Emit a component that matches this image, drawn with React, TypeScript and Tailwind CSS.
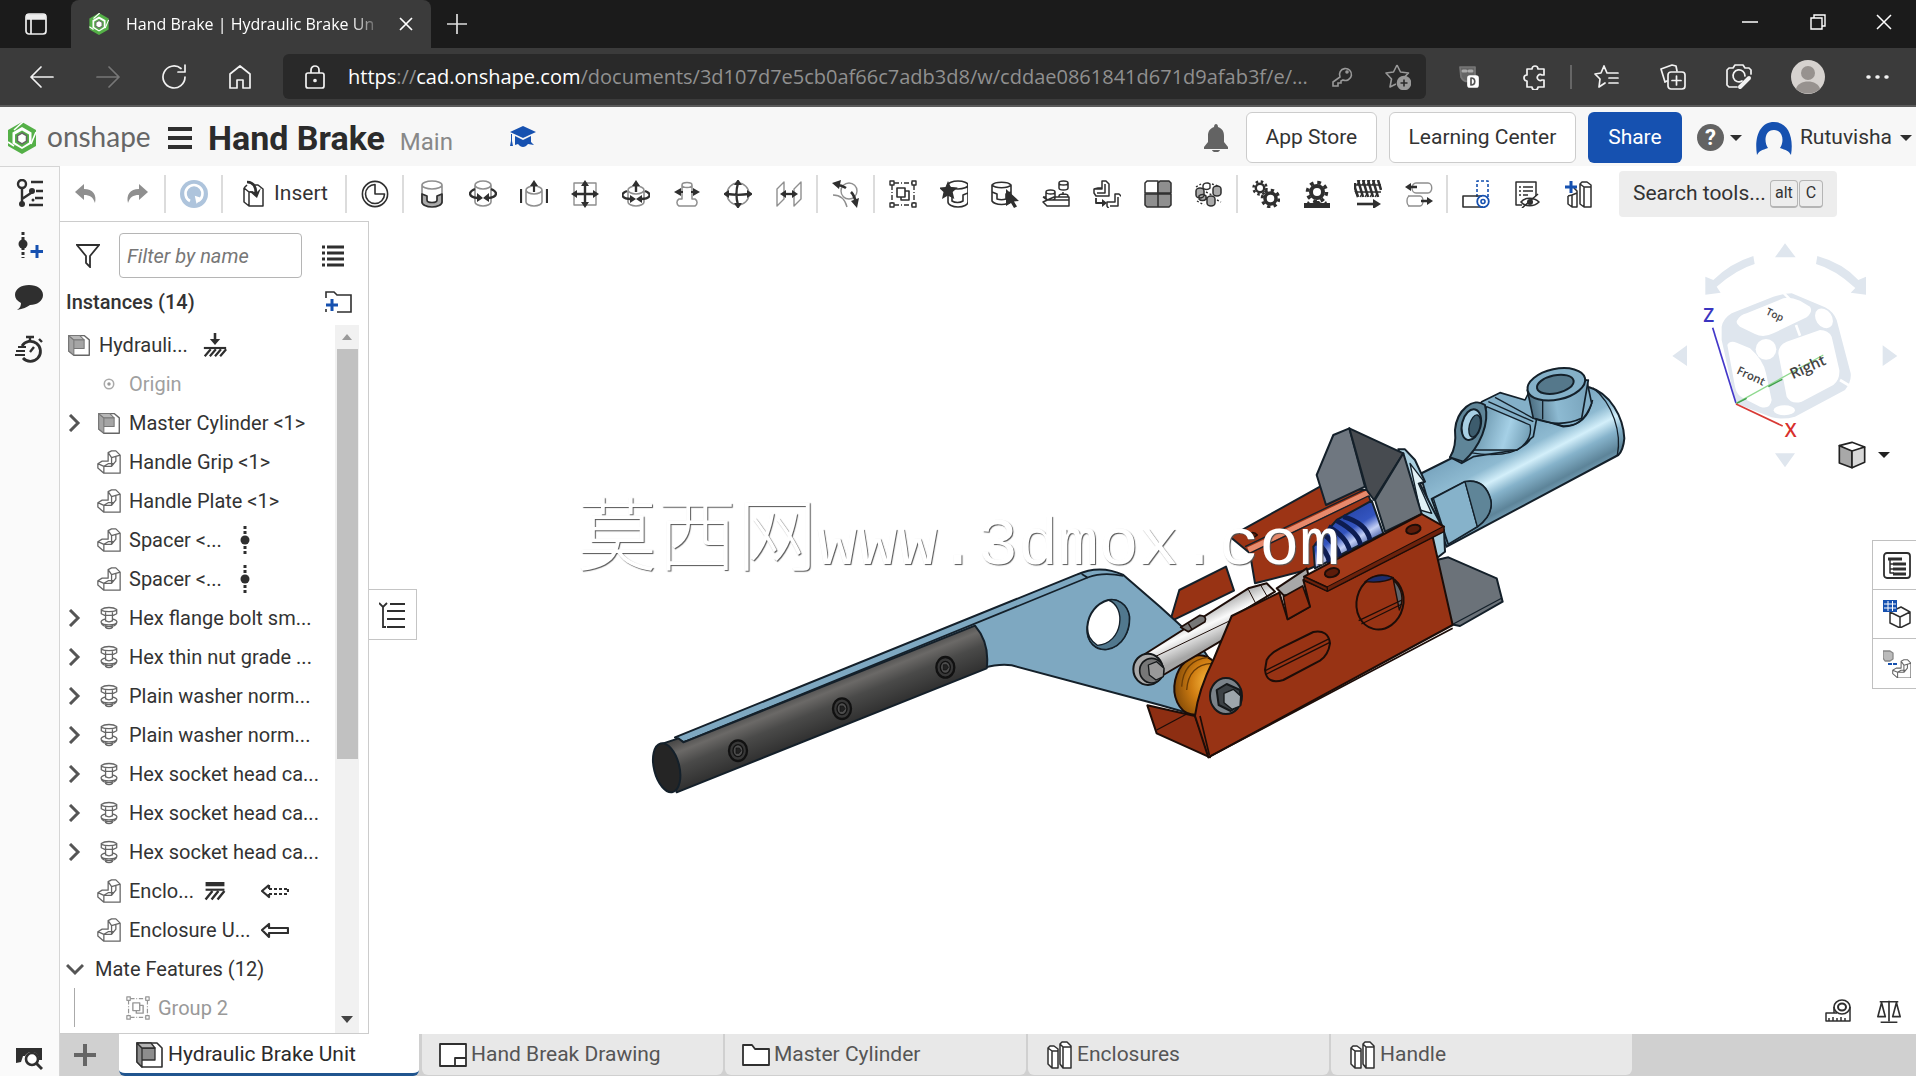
import { useState, type ReactNode } from "react";

type IconProps = { children: ReactNode; size?: number; label?: string };

/** 28-unit drawing grid shared by all the line icons. */
function Ico({ children, size = 28 }: IconProps) {
  return (
    <svg width={size} height={size} viewBox="0 0 28 28" fill="none" stroke="#2f2f2f" strokeWidth="1.8"
      strokeLinejoin="round" aria-hidden="true" className="shrink-0">
      {children}
    </svg>
  );
}

const G = "#8f8f8f";
const BLUE = "#1651b0";

function Cyl({ x = 5, y = 2, w = 18, h = 24, c = "#2f2f2f" }: { x?: number; y?: number; w?: number; h?: number; c?: string }) {
  const r = w / 2;
  return (
    <path stroke={c} strokeWidth="1.6"
      d={`M${x} ${y + 4}v${h - 8}a${r} 4 0 0 0 ${w} 0v-${h - 8}M${x} ${y + 4}a${r} 4 0 0 1 ${w} 0a${r} 4 0 0 1 -${w} 0z`} />
  );
}

const icons = {
  undo: <path fill={G} stroke="none" d="M3 12 12 4v5c9 0 13 6 11 14-2-6-5-8-11-8v5z" />,
  redo: <path fill={G} stroke="none" d="M25 12 16 4v5C7 9 3 15 5 23c2-6 5-8 11-8v5z" />,
  restore: (
    <>
      <circle cx="14" cy="14" r="14" fill="#aec4dc" stroke="none" />
      <path d="M10 21a8.500 8.500 0 1 1 8 0" stroke="#fff" strokeWidth="2.6" />
      <path d="M14 17h8l-4 7z" fill="#fff" stroke="none" transform="rotate(18 18 19)" />
    </>
  ),
  insert: (
    <>
      <path d="M4 8v14l5 4h14V9l-5-4h-3M4 8l5 4M9 12h4M9 12v14M4 8l3-3" strokeWidth="1.500" />
      <path d="M7 2c6 0 9 4 9 12" strokeWidth="2.600" />
      <path d="m9 11 8 7 4-10-4 4z" fill="#2f2f2f" stroke="none" />
    </>
  ),
  clock: (
    <>
      <circle cx="14" cy="14" r="12.6" strokeWidth="1.6" />
      <path d="M14 4.500a9.500 9.500 0 1 0 9.500 9.500H14z" strokeWidth="1.6" />
    </>
  ),
  fastened: (
    <>
      <Cyl x={4} y={1} w={20} h={25} c={G} />
      <path d="M4 14v8a10 5 0 0 0 20 0v-8l-5 2v4a5 2.500 0 0 1-10 0v-4z" fill="#aaa" strokeWidth="1.7" />
    </>
  ),
  revolute: (
    <>
      <Cyl x={6} y={1} w={16} h={25} c={G} />
      <path d="M6 9c-7 3-7 8 3 9M22 9c7 3 7 8-3 9" strokeWidth="2.4" />
      <path d="M8 13v9l6-4zM20 13v9l-6-4z" fill="#2f2f2f" stroke="none" />
    </>
  ),
  slider: (
    <>
      <Cyl x={6} y={6} w={16} h={20} c={G} />
      <path d="M1 9v14M27 9v14" strokeWidth="2.200" />
      <path d="M14 12V3" strokeWidth="2.2" /><path d="m14 0 4 6h-8z" fill="#2f2f2f" stroke="none" />
    </>
  ),
  planar: (
    <>
      <rect x="3" y="3" width="22" height="22" stroke={G} strokeWidth="1.4" />
      <path d="M14 3v22M3 14h22" strokeWidth="2.4" />
      <path d="m14 0 4 6h-8zM14 28l4-6h-8zM0 14l6-4v8zM28 14l-6-4v8z" fill="#2f2f2f" stroke="none" />
    </>
  ),
  cylindrical: (
    <>
      <Cyl x={6} y={6} w={16} h={20} c={G} />
      <path d="M14 12V3M5 11c-8 3-5 8 4 8M23 11c8 3 5 8-4 8" strokeWidth="2.4" />
      <path d="m14 0 4 6h-8zM8 15v8l6-4zM20 15v8l-6-4z" fill="#2f2f2f" stroke="none" />
    </>
  ),
  pinSlot: (
    <>
      <path d="M9 5v14H6a4 4 0 0 0 0 7h16a4 4 0 0 0 0-7h-3V5a5 2.500 0 0 0-10 0 5 2.500 0 0 0 10 0" stroke={G} strokeWidth="1.5" />
      <path d="M4 12h6M18 12h6" strokeWidth="2.2" />
      <path d="m1 12 7-4v8zM27 12l-7-4v8z" fill="#2f2f2f" stroke="none" />
    </>
  ),
  ball: (
    <>
      <circle cx="14" cy="14" r="11" stroke={G} strokeWidth="1.5" />
      <path d="M14 3c-2 7-2 15 0 22M3 14c7 1 15 1 22 0" strokeWidth="2.3" />
      <path d="m14-1 4 6h-8zM14 29l4-6h-8zM-1 14l6-4v8zM29 14l-6-4v8z" fill="#2f2f2f" stroke="none" />
    </>
  ),
  parallel: (
    <>
      <path d="m2 9 7-7v17l-7 7zM19 9l7-7v17l-7 7z" stroke={G} strokeWidth="1.4" />
      <path d="M8 14h12" strokeWidth="2.3" /><path d="m5 14 6-4v8zM23 14l-6-4v8z" fill="#2f2f2f" stroke="none" />
    </>
  ),
  tangent: (
    <>
      <circle cx="17" cy="11" r="8" stroke={G} strokeWidth="1.400" />
      <path d="M1 15c8 0 12 4 14 12" stroke={G} strokeWidth="1.400" />
      <path d="M5 5c4 0 6 1 9 3M19 12c3 3 4 6 5 11" strokeWidth="2.600" />
      <path d="m0 3 9-3-2 9zM25 28l-6-7 8-3z" fill="#2f2f2f" stroke="none" />
    </>
  ),
  group: (
    <>
      <path d="M5 3h18M5 25h18M3 5v18M25 5v18" strokeDasharray="5 2 1 2" strokeWidth="1.4" />
      <path d="M1 1h4v4H1zM23 1h4v4h-4zM1 23h4v4H1zM23 23h4v4h-4z" fill="#fff" strokeWidth="1.400" />
      <path d="M8 8h8v9H8z M16 11h4v9h-8v-3" strokeWidth="1.600" />
    </>
  ),
  mateConnector: (
    <>
      <path d="M8 5a10 4 0 0 1 20 0v17a10 5 0 0 1-20 0zM8 5a10 4 0 0 0 20 0M8 15l4 1v5c3 2 8 2 11 0v-6l5-2" strokeWidth="1.600" />
      <path d="m8 1 2.700 6 7 .500-5 4.500 1.600 7L8 15.500 2 19l1.500-7-5-4.500 7-.5z" fill="#2f2f2f" stroke="none" />
    </>
  ),
  selectMate: (
    <>
      <path d="M1 5a10 4 0 0 1 19 0v16a10 5 0 0 1-19 0zM1 5a10 4 0 0 0 19 0M1 12l5 2v5c3 1 6 1 9 0v-5l5-2" strokeWidth="1.600" />
      <path d="m15 9 13 12-5 .5 3 5-3 1.500-3-5-5 3z" fill="#2f2f2f" stroke="none" />
    </>
  ),
  bricks: (
    <>
      <path d="M1 17h3M12 17h15v9H5l-4-4zM1 17l4 3h22M17 3v5a4.500 2 0 0 0 9 0V3a4.500 2 0 0 0-9 0 4.500 2 0 0 0 9 0M4 12v6a4.500 2 0 0 0 9 0v-6a4.500 2 0 0 0-9 0 4.500 2 0 0 0 9 0M17 17v-1a4.500 2 0 0 1 9 0v1M21 12v3" strokeWidth="1.500" />
    </>
  ),
  replicate: (
    <>
      <path d="M9 1h4l3 3v12H3l-2-3V9h8zM1 9l4-1h4M12 4v9H4M22 14h4l3 3v12H16l-2-3v-4h8zM25 17v9h-8" strokeWidth="1.500" />
      <path d="M3 18v5h8" strokeWidth="1.800" /><path d="m9 19 5 4-5 4z" fill="#2f2f2f" stroke="none" />
    </>
  ),
  pattern: (
    <>
      <path d="M1 3 3 1h11v12H1zM14 1v26" strokeWidth="1.500" />
      <path d="M14 3l2-2h9l2 2v10H14zM1 14h13v13H3l-2-2zM14 14h13v11l-2 2H14z" fill={G} strokeWidth="1.500" />
    </>
  ),
  circular: (
    <>
      <path d="M8 6a4 3 0 0 1 7-2v4a4 3 0 0 1-7 0z" strokeWidth="1.4" />
      <path d="M18 9a4 3 0 0 1 8 0v4a4 3 0 0 1-8 0zM1 11a4 3 0 0 1 8 0v4a4 3 0 0 1-8 0zM12 19a4 3 0 0 1 8 0v4a4 3 0 0 1-8 0zM4 16a4 3 0 0 1 7 0v3a4 3 0 0 1-7 0z" fill="#aaa" strokeWidth="1.500" />
      <path d="M17 4l6 2M1 7l5-3M2 21l7 4M22 20l4 2M11 12l6 3" strokeDasharray="2 2" strokeWidth="1.400" />
    </>
  ),
  gears: (
    <>
      <circle cx="8" cy="8" r="4.200" strokeWidth="2.400" /><circle cx="8" cy="8" r="6.500" strokeWidth="2.500" strokeDasharray="2.500 2.600" />
      <circle cx="18.500" cy="18.500" r="5.500" strokeWidth="3.500" /><circle cx="18.500" cy="18.500" r="8.300" strokeWidth="3" strokeDasharray="3.300 3.220" />
    </>
  ),
  rack: (
    <>
      <circle cx="14" cy="12" r="6" strokeWidth="4" /><circle cx="14" cy="12" r="9.500" strokeWidth="3.500" strokeDasharray="3.700 3.760" />
      <path d="M1 28v-5h3l1-2 2 2h3l2-2h4l2 2h3l2-2 1 2h3v5z" fill="#2f2f2f" stroke="none" />
    </>
  ),
  screw: (
    <>
      <path d="M1 3v5l3 9M4 0l5 17M9 0l5 17M14 0l5 17M19 0l5 17M24 0l3 10" strokeWidth="2.600" />
      <path d="M1 11 4 17M3 5l3-5M8 5l3-5M13 5l3-5M18 5l3-5M6 17l3-5M11 17l3-5M16 17l3-5M21 17l3-5M1 5h26M1 12h26" strokeWidth="1.300" />
      <path d="M3 24h19" strokeWidth="2.600" /><path d="m19 19 8 5-8 5z" fill="#2f2f2f" stroke="none" />
    </>
  ),
  linear: (
    <>
      <path d="M11 3h12a3 4 0 0 1 0 10H11a4 5 0 0 1 0-10M3 16h12M3 26h13M5 16a3 5 0 0 0 0 10M15 16a3 5 0 0 1 0 10" stroke={G} strokeWidth="1.400" />
      <path d="M3 7h9M16 21h8" strokeWidth="2.300" /><path d="m0 7 6-4v8zM28 21l-6-4v8z" fill="#2f2f2f" stroke="none" />
    </>
  ),
  position: (
    <>
      <path d="M15 17V1h11v17" stroke={BLUE} strokeDasharray="3 2" strokeWidth="1.600" />
      <path d="M20 16H1v11h20" strokeWidth="1.600" /><circle cx="21" cy="21.500" r="5.800" stroke={BLUE} /><circle cx="21" cy="21.500" r="2" stroke={BLUE} strokeWidth="1.600" />
    </>
  ),
  hiddenList: (
    <>
      <path d="M9 25H3V2h20v14" strokeWidth="1.500" /><path d="M6 7h2M10 7h10M6 11h2M10 11h10M6 15h2M10 15h5" strokeWidth="1.700" />
      <path d="M8 22c4-5 13-5 18 0-5 5-14 5-18 0zM9 28l16-14" strokeWidth="1.600" /><circle cx="17" cy="22" r="3" fill="#2f2f2f" stroke="none" />
    </>
  ),
  addParts: (
    <>
      <path d="M4 16v8l4 3h5V11l-3-3M8 27V15l5-2M4 16l4-1M16 4v20l4 3h7V5l-4-3h-5zM16 4l4 3h7M20 7v20" strokeWidth="1.500" />
      <path d="M7 1v12M1 7h12" stroke={BLUE} strokeWidth="3" />
    </>
  ),
  tree: (
    <>
      <circle cx="7" cy="5" r="4" strokeWidth="2.400" /><path d="M7 9v15M7 20l9-6V13" strokeWidth="2.400" />
      <circle cx="17" cy="12" r="3" fill="#2f2f2f" stroke="none" /><circle cx="7" cy="25" r="3" fill="#2f2f2f" stroke="none" />
      <circle cx="18" cy="21" r="1.500" fill="#2f2f2f" stroke="none" />
      <path d="M16 3h12M21 12h7M20 19h8M14 26h14" strokeWidth="2.600" />
    </>
  ),
  addMate: (
    <>
      <path d="M8 1v26" strokeWidth="3" strokeDasharray="3 2" /><circle cx="8" cy="13" r="4.500" fill="#2f2f2f" stroke="none" />
      <path d="M22 14v13M15.500 20.500h13" stroke={BLUE} strokeWidth="3" />
    </>
  ),
  comment: <path d="M14 2c8 0 14 4 14 10s-6 10-13 10c-3 2-7 4-13 5 3-2 4-4 4-7C2 18 0 15 0 12 0 6 6 2 14 2z" fill="#2f2f2f" stroke="none" />,
  stopwatch: (
    <>
      <path d="M7 11a10 10 0 1 1 1 12" strokeWidth="2.800" /><path d="M11 2h8M15 2v4M24 4l3 3M15 17l4-5" strokeWidth="2.400" />
      <path d="M3 12h8M1 16h9M0 20h10" strokeWidth="1.800" />
    </>
  ),
  tabSearch: (
    <>
      <path d="M1 5h26v12h-3c0-5-3-8-7-8s-6 2-7 4H8l-2 6-5 1z" fill="#2f2f2f" stroke="none" />
      <circle cx="17" cy="16" r="6" fill="#fff" strokeWidth="2.600" /><path d="m21 20 6 6" strokeWidth="3" />
    </>
  ),
  assembly: (
    <>
      <path d="M2 3h18l6 5v18H8l-6-5z" fill="#fff" stroke="#666" strokeWidth="1.600" />
      <path d="m2 3 6 5v18l-6-5zM8 8h12v10H8z" fill="#a5a5a5" stroke="#777" strokeWidth="1.200" /><path d="M2 3h13l5 5H8z" fill="#b8b8b8" stroke="#777" strokeWidth="1.200" />
    </>
  ),
  part: (
    <>
      <path d="M1 16l5-3h7V3l4-2h5l5 5v21H8l-7-6zM1 16l7 3v8M8 19h9V9l10-3M17 9l-4-6M17 19l5-6V7M8 19l5-3h6" stroke="#666" strokeWidth="1.500" />
    </>
  ),
  bolt: (
    <>
      <path d="M5 4c4-3 14-3 18 0v5l-4 2h-10L5 9zM5 5c5 2 13 2 18 0M10 7v4M18 7v4M10 11v7M18 11v7M10 15c-8 2-7 7 4 7s12-5 4-7M10 17c2 2 6 2 8 0M10 22v3c2 2 6 2 8 0v-3M5 20c1 3 5 4 9 4s8-1 9-4" stroke="#666" strokeWidth="1.500" />
    </>
  ),
  origin: (
    <>
      <circle cx="14" cy="14" r="5.500" stroke="#aaa" strokeWidth="1.800" /><circle cx="14" cy="14" r="2" fill="#999" stroke="none" />
    </>
  ),
  ground: (
    <>
      <path d="M14 0v8" strokeWidth="3" /><path d="m8 7 6 7 6-7z" fill="#2f2f2f" stroke="none" />
      <path d="M1 17.500h26" strokeWidth="2.500" /><path d="m2 27 7-8M8 27l7-8M14 27l7-8M20 27l7-8" strokeWidth="2.600" />
    </>
  ),
  fixed: (
    <>
      <path d="M3 6h22" strokeWidth="5" /><path d="M3 12.500h22" strokeWidth="2.500" />
      <path d="m3 24 8-10M10 24l8-10M17 24l8-10" strokeWidth="2.800" />
    </>
  ),
  dof: (
    <>
      <path d="M14 0v28" strokeWidth="3" strokeDasharray="3 2" /><circle cx="14" cy="14" r="4.500" fill="#2f2f2f" stroke="none" />
    </>
  ),
  arrow: <path d="M1 14l7-6v4h19v5H8v4z" strokeWidth="2.200" />,
  arrowDashed: (
    <>
      <path d="M8 8l-7 6 7 6v-3M8 8v4" strokeWidth="2.200" /><path d="M8 12h20M8 17h20M27 12v5" strokeWidth="2.200" strokeDasharray="3 2" />
    </>
  ),
  tabAssembly: (
    <>
      <path d="M2 2h20l5 5v19H7l-5-5z" fill="#fff" strokeWidth="1.600" />
      <path d="m2 2 5 5v19l-5-5zM7 7h13v12H7z" fill="#8d8d8d" strokeWidth="1.300" /><path d="M2 2h14l4 5H7z" fill="#b5b5b5" strokeWidth="1.300" />
    </>
  ),
  drawing: <path d="M1 3h26v22H1zM16 25v-8h11" fill="#fff" strokeWidth="1.800" />,
  folder: <path d="M1 24V4h9l3 4h14v16z" fill="#fff" strokeWidth="1.800" />,
  studio: <path d="M3 7v16l4 4h6V8L9 5H5zM3 7l4 3h6M7 10v17M15 3v20l3 4h8V5l-4-4h-5zM15 3l3 3h8M18 6v21" fill="#fff" strokeWidth="1.500" />,
  tape: (
    <>
      <ellipse cx="18" cy="9" rx="8" ry="7" strokeWidth="1.600" /><ellipse cx="18" cy="9" rx="4" ry="3.500" strokeWidth="2" />
      <path d="M26 9v14H2v-8h11M5 23v-3M9 23v-4M13 23v-3M17 23v-4M21 23v-3M10 9v6" strokeWidth="1.500" />
    </>
  ),
  scales: <path d="M4 3h20M14 2v22M6 4 2 19h8zM22 4l-4 15h8zM5 25h18M2 19h8M18 19h8" strokeWidth="1.800" />,
};

type IconName = keyof typeof icons;

function Tool({ name }: { name: IconName }) {
  return (
    <button type="button" aria-label={name} className="flex h-12 w-[51px] shrink-0 items-center justify-center hover:bg-gray-100">
      <Ico>{icons[name]}</Ico>
    </button>
  );
}

function Sep() {
  return <span className="mx-[2px] h-[38px] w-[2px] shrink-0 bg-[#dcdcdc]" />;
}

function Caret() {
  return <svg width="12" height="8" viewBox="0 0 12 8" aria-hidden="true" className="shrink-0"><path d="M0 1h12L6 7z" fill="#2f2f2f" /></svg>;
}

function Logo({ size }: { size: number }) {
  return (
    <svg width={size} height={size} viewBox="0 0 32 32" aria-hidden="true" className="shrink-0">
      <path d="M16 0 30 8v16l-14 8L2 24V8z" fill="#54b047" />
      <path d="m16 5 9.500 5.500v11L16 27l-9.500-5.500v-11z" fill="#fff" />
      <path d="m16 8.500 7 4v8l-7 4.500-7-4.500v-8z" fill="#54b047" />
      <path d="m16 11 4.500 2.700v5.400L16 21.800l-4.500-2.700v-5.400z" fill="#fff" stroke="#666" strokeWidth="1.500" />
      <path d="M17 0 8 8M2 20l6 4M30 10l-5 12" stroke="#fff" strokeWidth="1.600" />
    </svg>
  );
}

/* ---------- browser chrome ---------- */

function ChromeButton({ label, children }: { label: string; children: ReactNode }) {
  return (
    <button type="button" aria-label={label} className="flex h-11 w-[66px] shrink-0 items-center justify-center">
      <svg width="26" height="26" viewBox="0 0 26 26" fill="none" stroke="#f2f2f2" strokeWidth="1.700" strokeLinejoin="round" strokeLinecap="round">
        {children}
      </svg>
    </button>
  );
}

function TabStrip() {
  return (
    <div className="flex h-12 bg-[#1b1b1b] text-white">
      <button type="button" aria-label="Tab actions" className="flex w-[71px] items-center justify-center">
        <svg width="22" height="22" viewBox="0 0 22 22" fill="none" stroke="#eee" strokeWidth="1.700">
          <rect x="1" y="1" width="20" height="20" rx="3" /><path d="M2 2h18v4H2z" fill="#eee" /><path d="M6 6v15" />
        </svg>
      </button>
      <div className="flex w-[360px] items-center rounded-t-lg bg-[#3b3b3b] pl-[17px]">
        <Logo size={22} />
        <span className="ml-4 w-[256px] whitespace-nowrap font-['Open_Sans',sans-serif] text-[16px] [mask-image:linear-gradient(to_right,black_88%,transparent)]">
          Hand Brake | Hydraulic Brake Un
        </span>
        <button type="button" aria-label="Close tab" className="ml-3 flex h-6 w-6 items-center justify-center">
          <svg width="14" height="14" viewBox="0 0 14 14" stroke="#fff" strokeWidth="1.700"><path d="m1 1 12 12M13 1 1 13" /></svg>
        </button>
      </div>
      <button type="button" aria-label="New tab" className="flex w-[52px] items-center justify-center">
        <svg width="22" height="22" viewBox="0 0 22 22" stroke="#ddd" strokeWidth="1.700"><path d="M11 1v20M1 11h20" /></svg>
      </button>
      <div className="ml-auto flex pb-1">
        <button type="button" aria-label="Minimize" className="flex w-[68px] items-center justify-center">
          <svg width="16" height="16" viewBox="0 0 16 16" stroke="#fff" strokeWidth="1.500"><path d="M0 8h16" /></svg>
        </button>
        <button type="button" aria-label="Restore" className="flex w-[68px] items-center justify-center">
          <svg width="16" height="16" viewBox="0 0 16 16" stroke="#fff" strokeWidth="1.400" fill="none"><path d="M1 4h11v11H1zM4 4V1h11v11h-3" /></svg>
        </button>
        <button type="button" aria-label="Close" className="flex w-[64px] items-center justify-center">
          <svg width="16" height="16" viewBox="0 0 16 16" stroke="#fff" strokeWidth="1.500"><path d="m1 1 14 14M15 1 1 15" /></svg>
        </button>
      </div>
    </div>
  );
}

function AddressRow() {
  return (
    <div className="flex h-[59px] items-center border-b-2 border-[#5a5a5a] bg-[#3b3b3b] pr-[6px] pl-[9px]">
      <ChromeButton label="Back"><path d="M24 13H2M12 3 2 13l10 10" /></ChromeButton>
      <ChromeButton label="Forward"><path stroke="#777" d="M2 13h22M14 3l10 10-10 10" /></ChromeButton>
      <ChromeButton label="Refresh"><path d="M24 13a11 11 0 1 1-4-8.500M24 1v7h-7" /></ChromeButton>
      <ChromeButton label="Home"><path d="M3 24V10l10-8 10 8v14h-7v-8h-6v8z" /></ChromeButton>
      <div className="ml-[10px] flex h-[45px] min-w-0 flex-1 items-center rounded-md bg-[#292929] font-['Open_Sans',sans-serif]">
        <svg width="20" height="24" viewBox="0 0 20 24" fill="none" stroke="#f2f2f2" strokeWidth="1.700" className="ml-[22px] shrink-0">
          <rect x="1" y="8" width="18" height="15" rx="2" /><path d="M6 8V5a4 4 0 0 1 8 0v3" /><circle cx="10" cy="15.500" r="1" fill="#fff" />
        </svg>
        <a href="#document" className="ml-[23px] min-w-0 flex-1 whitespace-nowrap text-[20px] text-[#909090]">
          <span className="text-white">https</span>://<span className="text-white">cad.onshape.com</span>/documents/3d107d7e5cb0af66c7adb3d8/w/cddae0861841d671d9afab3f/e/...
        </a>
        <button type="button" aria-label="Passwords" className="flex w-14 shrink-0 items-center justify-center">
          <svg width="22" height="22" viewBox="0 0 22 22" fill="none" stroke="#999" strokeWidth="1.600"><path d="M9 11a6 6 0 1 1 3 3l-2 1v2H7v3H2v-4z" /><circle cx="16" cy="6" r="1" fill="#999" /></svg>
        </button>
        <button type="button" aria-label="Add to favorites" className="flex w-14 shrink-0 items-center justify-center">
          <svg width="26" height="26" viewBox="0 0 26 26" fill="none" stroke="#999" strokeWidth="1.600" strokeLinejoin="round">
            <path d="m12 1 3.500 7 8 1-6 6M12 1 8.500 8 1 9l5.500 6L5 23l6-3" /><circle cx="19" cy="19" r="6.500" fill="#999" /><path d="M19 15.500v7M15.500 19h7" stroke="#292929" />
          </svg>
        </button>
      </div>
      <div className="ml-[10px] flex items-center">
        <ChromeButton label="Extension">
          <path d="M4 3h15v10c-4 6-11 6-14 0z" fill="#666" stroke="#777" /><path d="M7 7h3M13 7h3" stroke="#aaa" strokeWidth="3" />
          <rect x="12" y="12" width="10" height="11" rx="2" fill="#fff" stroke="#fff" /><path d="M15 14v7c5 0 5-7 0-7z" stroke="#555" />
        </ChromeButton>
        <ChromeButton label="Extensions"><path d="M5 5h5a3 3 0 1 1 6 0h6v6h-2a3 3 0 1 0 0 5h2v7h-6a3 3 0 1 1-6 0H5v-6a3 3 0 1 1 0-6z" /></ChromeButton>
        <span className="mx-[2px] h-6 w-[2px] bg-[#666]" />
        <ChromeButton label="Favorites"><path d="m10 2 3 7h11M10 2 7 9l-6 1 5 5-1 8 6-4M15 14h9M15 19h9" /></ChromeButton>
        <ChromeButton label="Collections"><path d="M7 17 5 18 1 5l11-4 4 1 1 5" /><rect x="8" y="8" width="17" height="17" rx="3" /><path d="M16.500 12v9M12 16.500h9" /></ChromeButton>
        <ChromeButton label="Capture"><path d="M11 23H3L1 21V6l2-2h4l2-3h8l2 3h4l2 2v4M16 17a6 6 0 1 1 3-5" /><path d="m14 23 9-9" strokeWidth="4" /></ChromeButton>
        <button type="button" aria-label="Profile" className="flex w-[72px] items-center justify-center">
          <svg width="34" height="34" viewBox="0 0 34 34">
            <circle cx="17" cy="17" r="17" fill="#d6d2cf" /><circle cx="17" cy="13" r="7" fill="#97928f" /><path d="M5 29c2-10 22-10 24 0-7 6-17 6-24 0z" fill="#97928f" />
          </svg>
        </button>
        <ChromeButton label="Menu"><path d="M4 13h1M13 13h1M22 13h1" strokeWidth="3.500" /></ChromeButton>
      </div>
    </div>
  );
}

/* ---------- application ---------- */

function Header() {
  return (
    <header className="flex h-[59px] items-center bg-[#f7f7f7] pt-[2px] pl-[6px] text-[21px]">
      <Logo size={32} />
      <span className="ml-[9px] w-[104px] pb-1 font-['Lato',sans-serif] text-[28px] leading-8 text-[#666]">onshape</span>
      <button type="button" aria-label="Document menu" className="ml-[17px] flex w-6 flex-col gap-[5px]">
        <span className="h-1 bg-[#2f2f2f]" /><span className="h-1 bg-[#2f2f2f]" /><span className="h-1 bg-[#2f2f2f]" />
      </button>
      <div className="ml-4 flex items-baseline gap-[15px]">
        <h1 className="text-[34px] leading-10 font-bold text-[#2b2b2b]">Hand Brake</h1>
        <span className="text-2xl text-[#888]">Main</span>
      </div>
      <svg width="28" height="28" viewBox="0 0 28 28" fill={BLUE} aria-hidden="true" className="ml-14">
        <path d="M14 2 27 8l-13 6L1 8zM6 12l8 4 8-4v6l3 3-6-1c-3 4-7 4-10 0l-3 1zM2 10h1v7l1 5H1l1-5z" />
      </svg>
      <div className="ml-auto flex items-center">
        <button type="button" aria-label="Notifications" className="mr-[17px]">
          <svg width="26" height="28" viewBox="0 0 26 28" fill="#636363"><path d="M13 0c1 0 2 1 2 3 5 2 6 5 6 9v6l4 5v2H1v-2l4-5v-6c0-4 1-7 6-9 0-2 1-3 2-3zM9 26h8c-1 3-7 3-8 0z" /></svg>
        </button>
        <a href="#store" className="flex h-[51px] w-[131px] items-center justify-center rounded-md border border-[#ccc] bg-white">App Store</a>
        <a href="#learn" className="ml-3 flex h-[51px] w-[187px] items-center justify-center rounded-md border border-[#ccc] bg-white">Learning Center</a>
        <button type="button" className="ml-3 h-[51px] w-[94px] rounded-md bg-[#1651b0] text-white">Share</button>
        <button type="button" aria-label="Help" className="ml-[15px] flex items-center gap-1.5">
          <span className="flex h-[27px] w-[27px] items-center justify-center rounded-full bg-[#636363] text-[22px] font-bold text-white">?</span>
          <Caret />
        </button>
        <button type="button" className="ml-[14px] flex items-center gap-2 pr-1">
          <svg width="36" height="34" viewBox="0 0 36 34" fill="none"><path d="M1 34C-2 16 4 1 18 1s20 15 17 33c-2-4-5-5-11-7 4-5 4-18-6-18s-10 13-6 18c-6 2-9 3-11 7z" fill={BLUE} /></svg>
          <span>Rutuvisha</span>
          <Caret />
        </button>
      </div>
    </header>
  );
}

const toolGroups: IconName[][] = [
  ["fastened", "revolute", "slider", "planar", "cylindrical", "pinSlot", "ball", "parallel"],
  ["tangent"],
  ["group", "mateConnector", "selectMate", "bricks", "replicate", "pattern", "circular"],
  ["gears", "rack", "screw", "linear"],
  ["position", "hiddenList", "addParts"],
];

function Toolbar() {
  return (
    <div className="flex h-[55px] items-center bg-white text-[21px]">
      <Tool name="undo" />
      <Tool name="redo" />
      <Sep />
      <Tool name="restore" />
      <Sep />
      <button type="button" className="flex h-12 w-[118px] shrink-0 items-center justify-center gap-1.5">
        <Ico>{icons.insert}</Ico>Insert
      </button>
      <Sep />
      <Tool name="clock" />
      {toolGroups.map((g) => (
        <div key={g[0]} className="flex items-center">
          <Sep />
          {g.map((n) => <Tool key={n} name={n} />)}
        </div>
      ))}
      <button type="button" className="ml-4 flex h-[46px] w-[218px] shrink-0 items-center rounded bg-[#ededed] pl-[14px]">
        Search tools...
        <kbd className="ml-1 flex h-7 w-7 items-center justify-center rounded-sm border border-b-2 border-[#b5b5b5] font-[inherit] text-base">alt</kbd>
        <kbd className="ml-px flex h-7 w-6 items-center justify-center rounded-sm border border-b-2 border-[#b5b5b5] font-[inherit] text-base">C</kbd>
      </button>
    </div>
  );
}

function Rail() {
  return (
    <nav className="flex w-[60px] shrink-0 flex-col items-center border-t border-r border-[#d5d5d5] bg-[#fafafa] pr-[2px]">
      {(["tree", "addMate", "comment", "stopwatch"] as IconName[]).map((n) => (
        <button key={n} type="button" aria-label={n} className="flex h-[52px] w-full items-center justify-center"><Ico>{icons[n]}</Ico></button>
      ))}
      <button type="button" aria-label="Search tabs" className="mt-auto flex h-[38px] w-full items-center justify-center"><Ico>{icons.tabSearch}</Ico></button>
    </nav>
  );
}

type TreeItem = { icon: IconName; text: string; open?: boolean; muted?: boolean; status?: IconName[]; w?: string };

const instances: TreeItem[] = [
  { icon: "origin", text: "Origin", muted: true },
  { icon: "assembly", text: "Master Cylinder <1>", open: false },
  { icon: "part", text: "Handle Grip <1>" },
  { icon: "part", text: "Handle Plate <1>" },
  { icon: "part", text: "Spacer <...", status: ["dof"], w: "w-[102px]" },
  { icon: "part", text: "Spacer <...", status: ["dof"], w: "w-[102px]" },
  { icon: "bolt", text: "Hex flange bolt sm...", open: false },
  { icon: "bolt", text: "Hex thin nut grade ...", open: false },
  { icon: "bolt", text: "Plain washer norm...", open: false },
  { icon: "bolt", text: "Plain washer norm...", open: false },
  { icon: "bolt", text: "Hex socket head ca...", open: false },
  { icon: "bolt", text: "Hex socket head ca...", open: false },
  { icon: "bolt", text: "Hex socket head ca...", open: false },
  { icon: "part", text: "Enclo...", status: ["fixed", "arrowDashed"], w: "w-[74px]" },
  { icon: "part", text: "Enclosure U...", status: ["arrow"], w: "w-[132px]" },
];

function Chevron({ down }: { down?: boolean }) {
  return (
    <svg width="18" height="18" viewBox="0 0 18 18" fill="none" stroke="#555" strokeWidth="3" aria-hidden="true" className="shrink-0">
      <path d={down ? "m1 5 8 8 8-8" : "m4 1 8 8-8 8"} />
    </svg>
  );
}

function TreeRow({ item }: { item: TreeItem }) {
  return (
    <li className="flex h-[39px] items-center pl-[6px]">
      <button type="button" aria-label="Expand" className="w-[18px]" disabled={item.open === undefined}>
        {item.open !== undefined && <Chevron />}
      </button>
      <span className="ml-[13px] flex w-6 justify-center"><Ico size={24}>{icons[item.icon]}</Ico></span>
      <span className={`ml-2 shrink-0 whitespace-nowrap ${item.w ?? ""} ${item.muted ? "text-[#a0a0a0]" : ""}`}>{item.text}</span>
      {item.status?.map((s, i) => (
        <span key={s} className={i ? "ml-[34px]" : ""}><Ico size={s === "fixed" ? 24 : 28}>{icons[s]}</Ico></span>
      ))}
    </li>
  );
}

function InstancePanel() {
  const [filter, setFilter] = useState("");
  return (
    <aside className="flex w-[309px] shrink-0 flex-col border-t border-r border-b border-[#ccc] bg-white text-[20px]">
      <div className="mt-[11px] flex h-[45px] items-center pl-4">
        <svg width="24" height="24" viewBox="0 0 24 24" fill="none" stroke="#2f2f2f" strokeWidth="1.800" aria-hidden="true"><path d="M1 1h22l-9 11v11l-4-4v-7z" /></svg>
        <input aria-label="Filter by name" placeholder="Filter by name" value={filter} onChange={(e) => setFilter(e.target.value)}
          className="ml-[19px] h-[45px] w-[183px] rounded border border-[#b5b5b5] px-[7px] outline-none placeholder:text-[#777] placeholder:italic" />
        <button type="button" aria-label="List options" className="ml-5">
          <svg width="22" height="22" viewBox="0 0 22 22" stroke="#2f2f2f" strokeWidth="3"><path d="M0 2h3M5 2h17M0 8h3M5 8h17M0 14h3M5 14h17M0 20h3M5 20h17" /></svg>
        </button>
      </div>
      <div className="flex h-[47px] items-center justify-between pr-4 pl-[6px]">
        <h2 className="font-medium">Instances (14)</h2>
        <button type="button" aria-label="Add folder">
          <svg width="28" height="24" viewBox="0 0 28 24" fill="none" stroke="#2f2f2f" strokeWidth="1.600"><path d="M2 8V2h8l3 3h14v17H13M2 19v3" /><path d="M8 9v12M2 15h12" stroke={BLUE} strokeWidth="3" /></svg>
        </button>
      </div>
      <div className="flex min-h-0 flex-1">
        <ul className="h-0 min-h-full min-w-0 flex-1 overflow-hidden">
          <li className="flex h-[39px] items-center pl-[7px]">
            <Ico size={24}>{icons.assembly}</Ico>
            <span className="ml-2 w-[104px]">Hydrauli...</span>
            <Ico size={24}>{icons.ground}</Ico>
          </li>
          {instances.map((item, i) => <TreeRow key={i} item={item} />)}
          <li>
            <button type="button" className="flex h-[39px] items-center gap-[11px] pl-[6px]"><Chevron down />Mate Features (12)</button>
            <ul className="ml-[14px] border-l border-[#aaa]">
              <li className="flex h-[39px] items-center gap-2 pl-[51px] text-[#999]">
                <span className="opacity-50"><Ico size={24}>{icons.group}</Ico></span>Group 2
              </li>
            </ul>
          </li>
        </ul>
        <div className="mr-[9px] flex w-6 shrink-0 flex-col items-center bg-[#f1f1f1]">
          <span className="flex h-6 items-center"><svg width="10" height="6" viewBox="0 0 10 6"><path d="M0 6h10L5 0z" fill="#9a9a9a" /></svg></span>
          <span className="h-[410px] w-[21px] bg-[#c1c1c1]" />
          <span className="mt-auto flex h-7 items-center"><svg width="12" height="7" viewBox="0 0 12 7"><path d="M0 0h12L6 7z" fill="#444" /></svg></span>
        </div>
      </div>
    </aside>
  );
}

/** Hand brake assembly, drawn in two patches that share one 3:1 grid. */
function BrakeModel() {
  return (
    <svg viewBox="369 221 1547 813" aria-label="Hand brake assembly" className="absolute inset-0 h-full w-full">
      <defs>
        <linearGradient id="grip" gradientUnits="userSpaceOnUse" x1="520" y1="600" x2="582" y2="755">
          <stop offset="0" stopColor="#3a3a3a" /><stop offset=".3" stopColor="#6b6967" /><stop offset=".55" stopColor="#4a4a49" /><stop offset="1" stopColor="#2e2e2e" />
        </linearGradient>
        <linearGradient id="body" gradientUnits="userSpaceOnUse" x1="1150" y1="230" x2="1265" y2="450">
          <stop offset="0" stopColor="#77a3bd" /><stop offset=".35" stopColor="#8ebad1" /><stop offset=".52" stopColor="#d3effa" /><stop offset=".68" stopColor="#86b3cb" /><stop offset=".88" stopColor="#5d8499" /><stop offset="1" stopColor="#7aa5bc" />
        </linearGradient>
        <linearGradient id="rod" gradientUnits="userSpaceOnUse" x1="220" y1="800" x2="262" y2="890">
          <stop offset="0" stopColor="#b9b9b9" /><stop offset=".4" stopColor="#fafafa" /><stop offset="1" stopColor="#a5a5a5" />
        </linearGradient>
        <linearGradient id="port" gradientUnits="userSpaceOnUse" x1="1080" y1="200" x2="1240" y2="250">
          <stop offset="0" stopColor="#6b96ad" /><stop offset=".55" stopColor="#a5d0e6" /><stop offset="1" stopColor="#6c98af" />
        </linearGradient>
        <linearGradient id="topPort" gradientUnits="userSpaceOnUse" x1="1235" y1="180" x2="1400" y2="150">
          <stop offset="0" stopColor="#4f7185" /><stop offset=".45" stopColor="#8dbad2" /><stop offset="1" stopColor="#7aa5bd" />
        </linearGradient>
        <linearGradient id="spring" gradientUnits="userSpaceOnUse" x1="640" y1="480" x2="720" y2="610">
          <stop offset="0" stopColor="#2340a0" /><stop offset=".5" stopColor="#3455c0" /><stop offset=".72" stopColor="#c3cff5" /><stop offset="1" stopColor="#203c90" />
        </linearGradient>
        <radialGradient id="brass" cx=".7" cy=".4" r=".7">
          <stop offset="0" stopColor="#f7b53c" /><stop offset=".5" stopColor="#cf7d12" /><stop offset="1" stopColor="#8a4f08" />
        </radialGradient>
      </defs>

      <g transform="translate(1120 350) scale(.33333)" stroke="#14202a" strokeWidth="6" strokeLinejoin="round">
        {/* master cylinder */}
        <path d="M900 372 1180 232 1408 112C1470 130 1510 200 1513 265Q1510 300 1495 315L980 590 935 490z" fill="url(#body)" />
        <path d="M1418 113C1480 160 1505 250 1492 316" fill="none" strokeWidth="4" />
        <path d="M935 447 1035 395Q1095 385 1112 450 1120 495 1072 530L985 582z" fill="#7ea9c1" />
        <path d="M1035 395 1072 530 985 582 940 445z" fill="#86b2ca" strokeWidth="4" />
        <path d="M1035 395Q1095 385 1112 450 1120 495 1072 530z" fill="#5f8598" strokeWidth="4" />
        <path d="M1085 155 1140 128 1215 150 1230 120 1400 90 1415 160Q1390 230 1330 230L1250 205 1240 260 1190 300 1060 320 1025 340 990 322z" fill="#84b0c8" strokeWidth="5" />
        <path d="M1100 170 1230 225Q1240 270 1190 300L1050 300z" fill="url(#port)" strokeWidth="4" />
        <path d="M1105 155 1240 215M1125 142 1240 205M1050 308Q1180 330 1230 270" fill="none" strokeWidth="4" />
        <path d="M1005 240C1010 180 1060 140 1095 165 1110 220 1080 290 1030 335L990 322Q1010 290 1005 240z" fill="#5f8598" />
        <ellipse cx="1054" cy="224" rx="28" ry="47" transform="rotate(14 1054 224)" fill="#a9d0e4" />
        <ellipse cx="1064" cy="228" rx="16" ry="34" transform="rotate(14 1064 228)" fill="#3d5c6d" strokeWidth="4" />
        <path d="M1222 120 1240 205Q1320 235 1385 205L1405 90z" fill="url(#topPort)" strokeWidth="5" />
        <path d="M1268 150v58M1245 205 1330 228Q1400 230 1418 150" fill="none" strokeWidth="4" />
        <ellipse cx="1309" cy="103" rx="88" ry="46" transform="rotate(-12 1309 103)" fill="#84b0c8" />
        <ellipse cx="1306" cy="103" rx="56" ry="27" transform="rotate(-12 1306 103)" fill="#55788b" />
        {/* mounting flange */}
        <path d="M835 298 855 298 885 330 915 395 900 402 940 480 972 540 975 605 950 625 925 560 850 350z" fill="#a9cfdf" />
        <path d="M870 340 912 395 895 400 935 490 900 480z" fill="#e0f1f6" strokeWidth="4" />
        {/* back wall of the enclosure */}
        <path d="M330 560 600 410 740 420 790 560 560 660 405 700 390 610z" fill="#9c3415" />
        <path d="M385 600 745 428" stroke="#e78a6c" strokeWidth="16" /><path d="M385 612 745 438M375 590 735 418" strokeWidth="4" />
        <path d="M178 720 318 650 342 722 150 815z" fill="#983314" />
        {/* steel bracket */}
        <path d="M688 235 640 255 590 375 618 465 735 410z" fill="#6f7780" />
        <path d="M688 235 850 310 762 450 740 420z" fill="#474b50" />
        <path d="M850 310 765 450 795 545 905 492z" fill="#6b7279" />
        <path d="M950 630 985 622 1130 685 1148 755 1020 828 990 822z" fill="#6b7279" />
        <path d="m1000 822 146-78" strokeWidth="4" />
        {/* boot */}
        <path d="M580 590 650 510 755 452 790 550 690 600 585 655z" fill="url(#spring)" />
        <path d="M670 500Q740 520 750 570M650 512Q720 550 722 590M625 530Q680 560 690 605M605 548Q650 580 660 620M588 575Q620 600 630 640" fill="none" stroke="#0d1c50" strokeWidth="15" />
      </g>

      {/* handle */}
      <g transform="translate(640 480) scale(.33333)" stroke="#14202a" strokeWidth="6" strokeLinejoin="round">
        <path fillRule="evenodd" d="M105 772 1310 284Q1380 252 1450 285L1560 380 1670 480 1750 600 1675 708 1560 675 1115 556Q1080 550 1030 564L130 786zM1342 440C1338 490 1370 510 1400 508 1450 500 1470 450 1468 410 1462 370 1430 355 1405 360 1370 370 1345 400 1342 440z" fill="#7ea8c1" />
        <path d="M1342 440C1338 490 1370 510 1400 508 1450 500 1470 450 1468 410 1462 370 1430 355 1405 360 1460 380 1450 490 1372 496 1350 480 1342 465 1342 440z" fill="#51788e" strokeWidth="4" />
        <path d="M130 787 1345 292Q1390 275 1450 288M1325 282l20 12" fill="none" strokeWidth="5" />
        <path d="M70 790 115 775 130 787 1005 437Q1050 490 1040 565L110 937z" fill="url(#grip)" />
        <ellipse cx="80" cy="863" rx="38" ry="75" transform="rotate(-14 80 863)" fill="#252525" />
        {[[294, 812], [606, 686], [916, 562]].map(([x, y]) => (
          <g key={x}>
            <ellipse cx={x} cy={y} rx="27" ry="31" fill="#383838" strokeWidth="7" stroke="#111" />
            <ellipse cx={x} cy={y} rx="15" ry="18" fill="#4d4d4d" stroke="#111" strokeWidth="4" />
            <path d={`M${x - 6} ${y - 8}h10l5 8-6 8h-9z`} fill="#222" stroke="#111" strokeWidth="2" />
          </g>
        ))}
      </g>

      <g transform="translate(1120 350) scale(.33333)" stroke="#1d0d08" strokeWidth="6" strokeLinejoin="round">
        {/* front of the enclosure */}
        <path d="M82 1066 225 1098 270 1222 110 1150z" fill="#8d2e12" /><path d="M110 1140 200 1092" strokeWidth="4" />
        <ellipse cx="232" cy="1005" rx="68" ry="90" transform="rotate(12 232 1005)" fill="url(#brass)" />
        <path d="M185 1010Q190 930 265 922M200 1020Q205 945 275 940" fill="none" stroke="#6b3c05" strokeWidth="4" />
        <path d="M470 715 560 655 572 700 545 740 490 735z" fill="#a8a8a8" />
        <path d="M75 912 385 715 440 700 465 725 340 800 325 860 130 975z" fill="url(#rod)" />
        <path d="M182 832 240 796Q262 798 255 815L205 845z" fill="#777" strokeWidth="5" /><path d="m205 820 12 20" strokeWidth="4" />
        <path d="M385 718l22 42M420 702l22 38M95 925 330 812" fill="none" strokeWidth="3" />
        <path d="M225 1098Q235 1020 280 930L335 798 478 728 503 808 570 770 550 690 622 722 938 560 998 825 265 1222z" fill="#983314" />
        <path d="m490 740 58-32 22 62-67 38z" fill="#963112" strokeWidth="5" />
        <path d="M552 680 905 492 972 530 622 712z" fill="#a33a19" /><path d="M622 712v12L972 545V530M622 712 552 680v10l70 34" fill="#6d220c" strokeWidth="4" />
        <ellipse cx="636" cy="668" rx="22" ry="13" transform="rotate(-15 636 668)" fill="#5c1c0a" /><ellipse cx="880" cy="538" rx="22" ry="13" transform="rotate(-15 880 538)" fill="#5c1c0a" />
        <path d="M380 555Q400 540 412 555 400 568 380 555z" fill="#5c1c0a" strokeWidth="4" />
        <ellipse cx="780" cy="757" rx="70" ry="82" transform="rotate(14 780 757)" fill="#983314" />
        <path d="M735 695Q775 665 820 683 795 700 735 695z" fill="#1c2d6c" strokeWidth="4" />
        <path d="M820 690Q860 730 838 780z" fill="#5f6469" strokeWidth="4" />
        <path d="M716 812 846 750M724 822 846 762" fill="none" strokeWidth="4" />
        <path d="M440 930Q450 910 480 895L580 846Q625 838 630 880 625 915 600 932L490 990Q440 1005 435 960z" fill="#983314" />
        <path d="M436 962 628 866M440 972 628 878" fill="none" strokeWidth="4" />
        <path d="M265 1222 998 835M240 1098 268 1215" fill="none" strokeWidth="5" />
        {/* fasteners */}
        <g stroke="#15181a">
          <ellipse cx="84" cy="958" rx="44" ry="47" fill="#aaa" /><ellipse cx="95" cy="962" rx="36" ry="37" fill="#777" strokeWidth="5" />
          <path d="M85 945 110 935 132 955 130 980 108 990 88 975z" fill="#999" strokeWidth="4" />
          <ellipse cx="318" cy="1038" rx="48" ry="54" fill="#7b838a" />
          <path d="m290 1020 30-18 40 18 2 45-30 18-36-18z" fill="#3c4145" /><path d="m312 1030 28-12 22 20-2 30-24 10-24-20z" fill="#9da5ab" strokeWidth="4" />
        </g>
      </g>
    </svg>
  );
}

function ViewCube() {
  return (
    <div className="absolute top-[9px] right-0 flex w-[276px] flex-col font-['Open_Sans',sans-serif]">
      <svg width="276" height="250" viewBox="0 0 828 750" aria-label="View cube">
        <g fill="#dfe6ee">
          <path d="m435 40 32 42h-62zM435 712l30-42h-60zM97 378l44-32v62zM772 378l-44-32v62z" />
          <path d="M340 78Q270 100 220 150L196 140v54l46-6-12-18Q290 118 344 102zM532 78Q610 100 655 150L678 140v54l-46-6 14-14Q585 118 528 102z" />
          <path d="M245 290Q250 265 275 250L400 200Q435 190 455 190L555 232Q580 245 590 270L632 430Q635 455 615 480L465 560Q430 570 395 562L300 525Q285 515 280 490L245 330z" />
        </g>
        <g fill="#fff">
          <path d="M292 270Q300 255 320 250L430 205Q450 200 480 212L510 230Q520 245 500 262L400 310Q370 325 345 312L300 290Q285 280 292 270zM262 345Q270 330 290 338L330 355Q370 390 378 430L395 510Q390 540 360 530L310 505Q290 495 285 470zM415 370Q415 345 440 335L540 300Q565 300 575 320L598 420Q600 450 580 465L485 515Q455 525 440 500z" />
          <circle cx="378" cy="358" r="31" /><ellipse cx="433" cy="541" rx="32" ry="15" /><ellipse cx="552" cy="265" rx="24" ry="32" transform="rotate(-35 552 265)" />
        </g>
        <path d="m468 285 12 32M432 190l18 18M600 450l30 18" stroke="#fff" strokeWidth="8" />
        <path d="M288 520 218 293" stroke="#4338c9" strokeWidth="5" />
        <path d="M288 520 550 375" stroke="#8fd98f" strokeWidth="4" /><path d="m290 520 30-15M385 470l42-22" stroke="#3f9f4a" strokeWidth="4" />
        <path d="M288 522 428 588" stroke="#d83a35" strokeWidth="5" />
        <g fill="#444" fontSize="44">
          <text x="190" y="275" fill="#3a35c0" fontSize="57" fontWeight="600">Z</text>
          <text x="434" y="620" fill="#d8302c" fontSize="57" fontWeight="600">X</text>
          <text x="458" y="448" transform="rotate(-24 458 448)" fontSize="45" fontWeight="600">Right</text>
          <text x="288" y="430" transform="rotate(25 288 430)" fontSize="34" fontWeight="600">Front</text>
          <text x="376" y="252" transform="rotate(25 376 252)" fontSize="30" fontWeight="600">Top</text>
        </g>
        <g stroke="#222" strokeWidth="5" strokeLinejoin="round">
          <path d="m636 637 38 14-38 16-38-20z" fill="#fff" /><path d="M598 647 636 663v50l-38-14z" fill="#a8a8a8" /><path d="m636 663 38-12v46l-38 16z" fill="#d8d8d8" />
        </g>
        <path d="M714 666h36l-18 18z" fill="#222" />
      </svg>
    </div>
  );
}

function Viewport() {
  return (
    <main className="relative min-w-0 flex-1 overflow-hidden bg-white">
      <BrakeModel />
      <p className="pointer-events-none absolute top-[252px] left-[208px] flex items-baseline font-['Liberation_Mono','Noto_Sans_CJK_SC',monospace] text-[67px] leading-[112px] whitespace-nowrap text-white [text-shadow:1px_1px_1px_#555]">
        <span className="font-['Noto_Sans_CJK_SC',sans-serif] text-[80px] font-light">莫西网</span>www.3dmox.com
      </p>
      <ViewCube />
      <button type="button" aria-label="Toggle list" className="absolute top-[368px] left-0 flex h-[51px] w-12 items-center justify-center border border-l-0 border-[#c5c5c5] bg-white">
        <svg width="28" height="28" viewBox="0 0 28 28" fill="none" stroke="#2f2f2f" strokeWidth="1.800"><path d="m0 2 4 4 4-4M4 6v20h3M11 3h15M8 10h18M8 18h18M8 26h18" /></svg>
      </button>
      <div className="absolute top-[319px] right-0 flex w-11 flex-col divide-y divide-[#c0c0c0] border border-r-0 border-[#c0c0c0] bg-white">
        <button type="button" aria-label="Properties" className="flex h-[49px] items-center justify-center pl-1">
          <Ico><rect x="1" y="2" width="26" height="25" rx="3" /><path d="M5 8h14M10 13h13M10 18h13M10 23h13" strokeWidth="3" /><path d="M7 8v14h4M7 13h4M7 18h4" strokeWidth="1.500" /></Ico>
        </button>
        <button type="button" aria-label="Configurations" className="flex h-[49px] items-center justify-center pl-1">
          <Ico><path d="m7 12 11-5 9 5v11l-10 5-10-5zM7 12l10 5 10-5M17 17v11" strokeWidth="1.500" /><path d="M0 0h14v12H0z" fill={BLUE} stroke="none" /><path d="M5 1v10M9.500 1v10M1 4h12M1 8h12" stroke="#fff" strokeWidth="1" /></Ico>
        </button>
        <button type="button" aria-label="Exploded views" className="flex h-[49px] items-center justify-center pl-1">
          <Ico><path d="M0 1h7l3 2v6l-3 2H2L0 8z" fill="#bbb" stroke="#888" strokeWidth="1.300" /><path d="M5 14h10" stroke={BLUE} strokeDasharray="4 1" /><g transform="translate(9 9) scale(.7)">{icons.part}</g></Ico>
        </button>
      </div>
      <div className="absolute right-[14px] bottom-2 flex gap-6">
        <button type="button" aria-label="Measure"><Ico>{icons.tape}</Ico></button>
        <button type="button" aria-label="Mass properties"><Ico size={26}>{icons.scales}</Ico></button>
      </div>
    </main>
  );
}

const docTabs: { icon: IconName; text: string }[] = [
  { icon: "drawing", text: "Hand Break Drawing" },
  { icon: "folder", text: "Master Cylinder" },
  { icon: "studio", text: "Enclosures" },
  { icon: "studio", text: "Handle" },
];

function DocumentTabs() {
  return (
    <footer className="flex h-[42px] shrink-0 bg-[#d0d0d0] text-[21px]">
      <button type="button" aria-label="Add tab" className="flex w-[59px] items-center justify-center pr-[9px]">
        <svg width="22" height="22" viewBox="0 0 22 22" stroke="#666" strokeWidth="4"><path d="M11 0v22M0 11h22" /></svg>
      </button>
      <button type="button" className="mr-[3px] flex w-[300px] items-center gap-[5px] rounded-b-md border-b-[3px] border-[#20558f] bg-white pt-[3px] pl-4 text-[#2b2b2b]">
        <Ico>{icons.tabAssembly}</Ico>Hydraulic Brake Unit
      </button>
      {docTabs.map((t) => (
        <button key={t.text} type="button" className="mr-[2px] flex h-[41px] w-[301px] items-center gap-1 rounded-b-md bg-[#e8e8e8] pl-[17px] text-[#555]">
          <Ico>{icons[t.icon]}</Ico>{t.text}
        </button>
      ))}
    </footer>
  );
}

export default function App() {
  return (
    <div className="flex h-screen flex-col overflow-hidden bg-white font-['Roboto',sans-serif] text-[#333]">
      <TabStrip />
      <AddressRow />
      <Header />
      <div className="flex min-h-0 flex-1">
        <Rail />
        <div className="flex min-w-0 flex-1 flex-col">
          <Toolbar />
          <div className="flex min-h-0 flex-1">
            <InstancePanel />
            <Viewport />
          </div>
          <DocumentTabs />
        </div>
      </div>
    </div>
  );
}
